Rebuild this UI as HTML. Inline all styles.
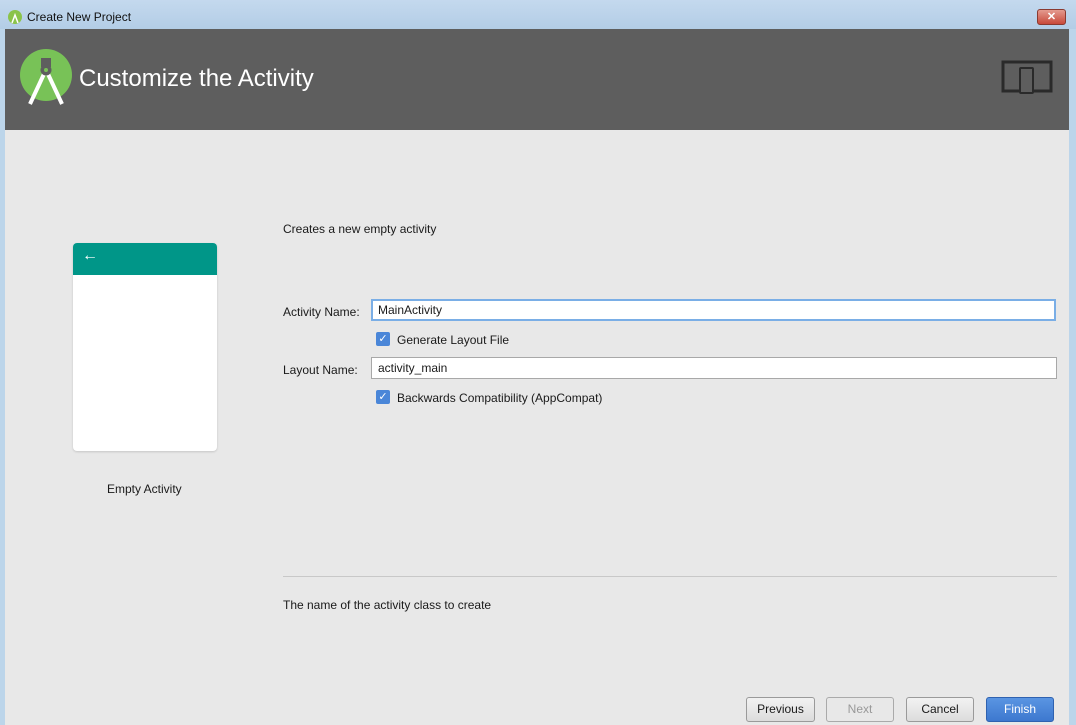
<!DOCTYPE html>
<html><head><style>
*{margin:0;padding:0;box-sizing:border-box}
body{width:1076px;height:725px;overflow:hidden;background:#bcd5ea;font-family:"Liberation Sans",sans-serif;font-size:12px;color:#1a1a1a;position:relative}
.tb{position:absolute;left:0;top:0;width:1076px;height:29px;background:linear-gradient(#c4d9ee,#b3cde6)}
.tb span{position:absolute;left:27px;top:10px;font-size:12px;color:#111}
.close{position:absolute;left:1037px;top:9px;width:29px;height:16px;border-radius:3px;background:linear-gradient(#e49b8f,#c8493a);border:1px solid #8a3a30;color:#fff;font-size:11px;font-weight:bold;text-align:center;line-height:14px}
.main{position:absolute;left:5px;top:29px;width:1064px;height:696px;background:#e8e8e8}
.hdr{position:absolute;left:5px;top:29px;width:1064px;height:101px;background:#5e5e5e}
.ttl{position:absolute;left:79px;top:65px;font-size:24px;color:#fff}
.a{position:absolute;font-size:12px}
.inp{position:absolute;height:22px;background:#fff;border:1px solid #a8a8a8;padding:3px 6px;font-size:12px}
.cb{position:absolute;width:14px;height:14px;background:#4a86d8;border-radius:2px;color:#fff;font-size:11px;line-height:14px;text-align:center}
.btn{position:absolute;top:697px;height:25px;border:1px solid #9a9a9a;border-radius:3px;background:linear-gradient(#f2f2f2,#dcdcdc);text-align:center;line-height:23px;font-size:12px}
</style></head><body>
<div class="tb"><svg style="position:absolute;left:8px;top:10px" width="14" height="14"><circle cx="7" cy="7" r="7" fill="#8bc34a"/><path d="M4 13L7 5L10 13" stroke="#fff" stroke-width="1.5" fill="none"/></svg><span>Create New Project</span></div>
<div class="close">✕</div>
<div class="main"></div>
<div class="hdr"></div>
<svg style="position:absolute;left:19px;top:46px" width="56" height="62"><circle cx="27" cy="29" r="26" fill="#78c257"/><path d="M11 58L25 28M43 58L29 28" stroke="#fff" stroke-width="4" fill="none"/><rect x="22" y="12" width="10" height="9" fill="#5e5e5e"/><circle cx="27" cy="24" r="5.5" fill="#5e5e5e"/><circle cx="27" cy="24" r="2" fill="#78c257"/></svg>
<div class="ttl">Customize the Activity</div>
<svg style="position:absolute;left:1001px;top:60px" width="52" height="34"><rect x="2" y="2" width="48" height="29" fill="none" stroke="#2a2a2a" stroke-width="3"/><rect x="19" y="8" width="13" height="25" rx="1" fill="#5e5e5e" stroke="#2a2a2a" stroke-width="2"/></svg>
<div style="position:absolute;left:73px;top:243px;width:144px;height:208px;background:#fff;border-radius:4px;box-shadow:0 1px 2px rgba(0,0,0,.15);overflow:hidden"><div style="height:32px;background:#009688;color:#fff;font-size:16px;padding:4px 9px">←</div></div>
<div class="a" style="left:107px;top:482px">Empty Activity</div>
<div class="a" style="left:283px;top:222px">Creates a new empty activity</div>
<div class="a" style="left:283px;top:305px">Activity Name:</div>
<div class="inp" style="left:371px;top:299px;width:685px;border:2px solid #7aaee6;padding:2px 5px">MainActivity</div>
<div class="cb" style="left:376px;top:332px">✓</div>
<div class="a" style="left:397px;top:333px">Generate Layout File</div>
<div class="a" style="left:283px;top:363px">Layout Name:</div>
<div class="inp" style="left:371px;top:357px;width:686px">activity_main</div>
<div class="cb" style="left:376px;top:390px">✓</div>
<div class="a" style="left:397px;top:391px">Backwards Compatibility (AppCompat)</div>
<div style="position:absolute;left:283px;top:576px;width:774px;height:1px;background:#c8c8c8"></div>
<div class="a" style="left:283px;top:598px">The name of the activity class to create</div>
<div class="btn" style="left:746px;width:69px">Previous</div>
<div class="btn" style="left:826px;width:68px;color:#999;background:#e8e8e8;border-color:#aaa">Next</div>
<div class="btn" style="left:906px;width:68px">Cancel</div>
<div class="btn" style="left:986px;width:68px;background:linear-gradient(#5a95e2,#3d78cf);border-color:#2f62b0;color:#fff">Finish</div>
</body></html>
